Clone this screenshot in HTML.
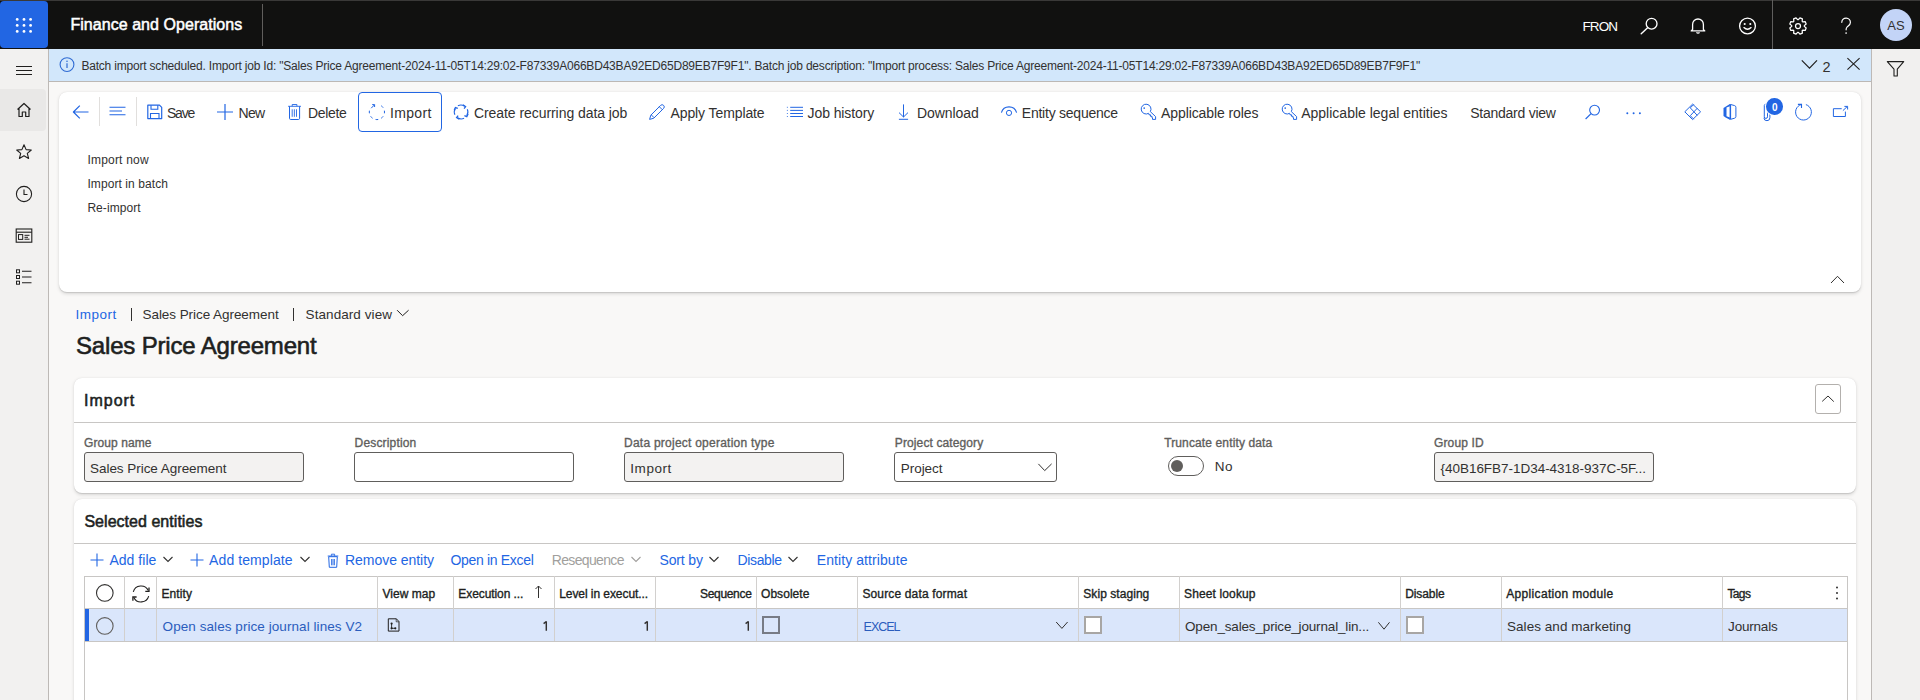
<!DOCTYPE html>
<html><head><meta charset="utf-8"><title>Finance and Operations</title>
<style>
html,body{margin:0;padding:0;}
body{width:1920px;height:700px;overflow:hidden;position:relative;background:#f9f8f7;font-family:"Liberation Sans", sans-serif;}
.t{position:absolute;white-space:pre;}
svg{overflow:visible}
</style></head><body>
<div style="position:absolute;left:0px;top:0px;width:1920px;height:49px;background:#111110"></div>
<div style="position:absolute;left:0px;top:0px;width:1920px;height:1px;background:#3a3938"></div>
<div style="position:absolute;left:0px;top:1px;width:48px;height:47px;background:#2266e3;border-radius:4px"></div>
<svg style="position:absolute;left:0px;top:0px;" width="48" height="49" viewBox="0 0 48 49" fill="none"><circle cx="17.2" cy="19.4" r="1.4" fill="#fff"/><circle cx="17.2" cy="25.4" r="1.4" fill="#fff"/><circle cx="17.2" cy="31.4" r="1.4" fill="#fff"/><circle cx="24" cy="19.4" r="1.4" fill="#fff"/><circle cx="24" cy="25.4" r="1.4" fill="#fff"/><circle cx="24" cy="31.4" r="1.4" fill="#fff"/><circle cx="30.6" cy="19.4" r="1.4" fill="#fff"/><circle cx="30.6" cy="25.4" r="1.4" fill="#fff"/><circle cx="30.6" cy="31.4" r="1.4" fill="#fff"/></svg>
<div style="position:absolute;left:262px;top:4px;width:1px;height:42px;background:#605e5c"></div>
<svg style="position:absolute;left:1638px;top:16px;" width="22" height="20" viewBox="0 0 22 20" fill="none"><circle cx="13.6" cy="7.7" r="5.4" stroke="#fff" stroke-width="1.35"/><path d="M9.6 11.7 L3.2 17.8" stroke="#fff" stroke-width="1.4" stroke-linecap="round"/></svg>
<svg style="position:absolute;left:1688px;top:16px;" width="20" height="20" viewBox="0 0 20 20" fill="none"><path d="M4.6 13.6 V8.4 a5.4 5.4 0 0 1 10.8 0 V13.6 l1.4 1.3 H3.2 Z" stroke="#fff" stroke-width="1.3" stroke-linejoin="round"/><path d="M8.6 16.2 a1.5 1.5 0 0 0 2.8 0" stroke="#fff" stroke-width="1.3"/></svg>
<svg style="position:absolute;left:1737px;top:15px;" width="22" height="22" viewBox="0 0 22 22" fill="none"><circle cx="10.5" cy="11" r="7.9" stroke="#fff" stroke-width="1.35"/><circle cx="7.7" cy="9" r="1.05" fill="#fff"/><circle cx="13.3" cy="9" r="1.05" fill="#fff"/><path d="M6.9 12.6 q3.6 3.4 7.2 0" stroke="#fff" stroke-width="1.35" stroke-linecap="round"/></svg>
<div style="position:absolute;left:1772px;top:0px;width:1px;height:49px;background:#5f5e5d"></div>
<svg style="position:absolute;left:1786.7px;top:15px;" width="22" height="22" viewBox="0 0 22 22" fill="none"><g transform="translate(11,11)"><path d="M6.29 0.38 L8.17 1.96 L7.16 4.39 L4.72 4.17 L4.17 4.72 L4.39 7.16 L1.96 8.17 L0.38 6.29 L-0.38 6.29 L-1.96 8.17 L-4.39 7.16 L-4.17 4.72 L-4.72 4.17 L-7.16 4.39 L-8.17 1.96 L-6.29 0.38 L-6.29 -0.38 L-8.17 -1.96 L-7.16 -4.39 L-4.72 -4.17 L-4.17 -4.72 L-4.39 -7.16 L-1.96 -8.17 L-0.38 -6.29 L0.38 -6.29 L1.96 -8.17 L4.39 -7.16 L4.17 -4.72 L4.72 -4.17 L7.16 -4.39 L8.17 -1.96 L6.29 -0.38Z" stroke="#fff" stroke-width="1.25" stroke-linejoin="round"/><circle r="2.5" stroke="#fff" stroke-width="1.25"/></g></svg>
<svg style="position:absolute;left:1836px;top:15px;" width="20" height="22" viewBox="0 0 20 22" fill="none"><path d="M5.8 7.3 a4.3 4.3 0 0 1 8.6 0.2 c0 2.4 -2 3.1 -3.2 4.3 c-0.8 0.8 -1.1 1.5 -1.1 3" stroke="#fff" stroke-width="1.2" stroke-linecap="round"/><circle cx="10.1" cy="18" r="0.85" fill="#fff"/></svg>
<div style="position:absolute;left:1880px;top:8.6px;width:32px;height:32px;border-radius:50%;background:#c3d4f7"></div>
<div style="position:absolute;left:0px;top:49px;width:48px;height:651px;background:#f2f1f0"></div>
<div style="position:absolute;left:48px;top:49px;width:1px;height:651px;background:#bdb9b6"></div>
<svg style="position:absolute;left:14px;top:60px;" width="20" height="20" viewBox="0 0 20 20" fill="none"><path d="M2 6.5 H18 M2 10.5 H18 M2 14.5 H18" stroke="#201f1e" stroke-width="1"/></svg>
<div style="position:absolute;left:0px;top:89px;width:46px;height:42px;background:#e9e8e7;border-radius:0 4px 4px 0"></div>
<svg style="position:absolute;left:14px;top:100px;" width="20" height="20" viewBox="0 0 20 20" fill="none"><path d="M3.5 9.5 L10 3.5 L16.5 9.5 M5 8.3 V16.5 H8.3 V12 H11.7 V16.5 H15 V8.3" stroke="#201f1e" stroke-width="1.2" stroke-linejoin="round"/></svg>
<svg style="position:absolute;left:14px;top:142px;" width="20" height="20" viewBox="0 0 20 20" fill="none"><path d="M10 2.8 L12.1 7.6 L17.3 8 L13.3 11.4 L14.6 16.5 L10 13.7 L5.4 16.5 L6.7 11.4 L2.7 8 L7.9 7.6 Z" stroke="#201f1e" stroke-width="1.1" stroke-linejoin="round"/></svg>
<svg style="position:absolute;left:14px;top:184px;" width="20" height="20" viewBox="0 0 20 20" fill="none"><circle cx="10" cy="10" r="7.6" stroke="#201f1e" stroke-width="1.1"/><path d="M10 5.5 V10.5 H13.5" stroke="#201f1e" stroke-width="1.1"/></svg>
<svg style="position:absolute;left:14px;top:226px;" width="20" height="20" viewBox="0 0 20 20" fill="none"><rect x="2.2" y="3" width="15.6" height="13.2" stroke="#201f1e" stroke-width="1.1"/><path d="M2.2 6.2 H17.8" stroke="#201f1e" stroke-width="1.1"/><rect x="4.5" y="8.6" width="4.2" height="4.8" stroke="#201f1e" stroke-width="1"/><path d="M10.5 9.3 H15.5 M10.5 11.3 H14 M10.5 13.2 H15.5" stroke="#201f1e" stroke-width="1"/></svg>
<svg style="position:absolute;left:14px;top:267px;" width="20" height="20" viewBox="0 0 20 20" fill="none"><rect x="2.5" y="2.8" width="3" height="3" stroke="#201f1e" stroke-width="1"/><rect x="2.5" y="8.5" width="3" height="3" stroke="#201f1e" stroke-width="1"/><rect x="2.5" y="14.2" width="3" height="3" stroke="#201f1e" stroke-width="1"/><path d="M8 4.3 H17.5 M8 10 H17.5 M8 15.7 H17.5 M8 4.3" stroke="#201f1e" stroke-width="1.1"/></svg>
<div style="position:absolute;left:49px;top:82px;width:1822px;height:618px;background:#f9f8f7"></div>
<div style="position:absolute;left:49px;top:49px;width:1822px;height:32px;background:#d2e7fb"></div>
<div style="position:absolute;left:49px;top:81px;width:1822px;height:1px;background:#bcb8b5"></div>
<svg style="position:absolute;left:58px;top:56px;" width="18" height="18" viewBox="0 0 18 18" fill="none"><circle cx="9" cy="8.6" r="6.9" stroke="#2f6bd3" stroke-width="1.1"/><path d="M9 7.3 V12" stroke="#2f6bd3" stroke-width="1.2"/><circle cx="9" cy="5.2" r="0.8" fill="#2f6bd3"/></svg>
<svg style="position:absolute;left:1800px;top:58px;" width="20" height="14" viewBox="0 0 20 14" fill="none"><path d="M1.8 2.3 L9.5 10.2 L17 2.3" stroke="#201f1e" stroke-width="1.2"/></svg>
<svg style="position:absolute;left:1845px;top:56px;" width="18" height="18" viewBox="0 0 18 18" fill="none"><path d="M2.4 2.2 L14.6 13.6 M14.6 2.2 L2.4 13.6" stroke="#201f1e" stroke-width="1.1"/></svg>
<div style="position:absolute;left:1871px;top:49px;width:49px;height:651px;background:#f1f0ef"></div>
<div style="position:absolute;left:1871px;top:49px;width:1px;height:651px;background:#bdb9b6"></div>
<svg style="position:absolute;left:1885px;top:59px;" width="22" height="20" viewBox="0 0 22 20" fill="none"><path d="M2.3 2.6 H18.7 L12.3 10.2 V17 H9 V10.2 Z" stroke="#201f1e" stroke-width="1.1" stroke-linejoin="round"/></svg>
<div style="position:absolute;left:59px;top:92px;width:1802px;height:200px;background:#fff;border-radius:8px;box-shadow:0 1.6px 3.6px rgba(0,0,0,0.13),0 0.3px 0.9px rgba(0,0,0,0.11)"></div>
<svg style="position:absolute;left:70px;top:102px;" width="22" height="20" viewBox="0 0 22 20" fill="none"><path d="M3.5 10 H18.5 M9.8 3.6 L3.4 10 L9.8 16.4" stroke="#2266e3" stroke-width="1.2" stroke-linejoin="round"/></svg>
<div style="position:absolute;left:99px;top:97px;width:1px;height:29px;background:#e1dfdd"></div>
<svg style="position:absolute;left:107px;top:102px;" width="22" height="20" viewBox="0 0 22 20" fill="none"><path d="M2.5 5.2 H18.5 M2.5 9 H15 M2.5 12.8 H18.5" stroke="#2266e3" stroke-width="1.1"/></svg>
<div style="position:absolute;left:136px;top:97px;width:1px;height:29px;background:#e1dfdd"></div>
<svg style="position:absolute;left:145px;top:102px;" width="20" height="20" viewBox="0 0 20 20" fill="none"><path d="M2.8 3.2 H14.5 L16.7 5.4 V16.6 H2.8 Z" stroke="#2266e3" stroke-width="1.2" stroke-linejoin="round"/><path d="M6 3.2 V7.2 H12.8 V3.2 M5.5 16.6 V11.5 H14 V16.6" stroke="#2266e3" stroke-width="1.1"/></svg>
<svg style="position:absolute;left:215px;top:102px;" width="20" height="20" viewBox="0 0 20 20" fill="none"><path d="M10 2 V18 M2 10 H18" stroke="#2266e3" stroke-width="1.2"/></svg>
<svg style="position:absolute;left:284px;top:102px;" width="20" height="20" viewBox="0 0 20 20" fill="none"><path d="M5.5 4.3 V16.3 a1.2 1.2 0 0 0 1.2 1.2 H14.4 a1.2 1.2 0 0 0 1.2 -1.2 V4.3" stroke="#2266e3" stroke-width="1"/><path d="M4.1 4.3 H17 M8.2 4.3 V2.5 H12.9 V4.3 M8.2 7.3 V14.8 M10.35 7.3 V14.8 M12.5 7.3 V14.8" stroke="#2266e3" stroke-width="0.9"/></svg>
<div style="position:absolute;left:358px;top:92px;width:82px;height:38px;border:1px solid #2266e3;border-radius:4px;box-sizing:content-box"></div>
<svg style="position:absolute;left:367px;top:102px;" width="20" height="20" viewBox="0 0 20 20" fill="none"><path d="M17.38 8.68 A7.6 7.6 0 0 1 17.38 11.32 M16.13 14.36 A7.6 7.6 0 0 1 14.26 16.23 M11.22 17.48 A7.6 7.6 0 0 1 8.58 17.48 M5.54 16.23 A7.6 7.6 0 0 1 3.67 14.36 M2.42 11.32 A7.6 7.6 0 0 1 2.42 8.68 M14.26 3.77 A7.6 7.6 0 0 1 16.13 5.64 " stroke="#2266e3" stroke-width="1"/><path d="M4.2 6.2 L7.4 2.9 M5.2 2.6 H7.6 V5" stroke="#2266e3" stroke-width="1"/></svg>
<svg style="position:absolute;left:451px;top:102px;" width="20" height="20" viewBox="0 0 20 20" fill="none"><path d="M6.9 3.8 A6.5 6.5 0 0 1 13.6 4.3 M16.3 7.3 A6.5 6.5 0 0 1 15.8 13.6 M13.1 16.3 A6.5 6.5 0 0 1 6.6 15.8 M3.9 12.8 A6.5 6.5 0 0 1 4.3 6.6" stroke="#2266e3" stroke-width="1.1"/><path d="M11.9 2.8 L14.6 4.6 L13.1 6.6 M17.1 12 L15.8 14.6 L13.4 13.6 M8.3 17.2 L5.6 15.6 L7.1 13.6 M3.2 8.3 L4.4 5.6 L6.8 6.4" stroke="#2266e3" stroke-width="1.3" stroke-linejoin="miter"/></svg>
<svg style="position:absolute;left:647px;top:102px;" width="20" height="20" viewBox="0 0 20 20" fill="none"><path d="M2.6 17.4 L3.8 13.2 L13.6 3.4 A2.1 2.1 0 0 1 16.6 6.4 L6.8 16.2 Z M12.3 4.7 L15.3 7.7 M4.3 12.9 L7.1 15.7" stroke="#2266e3" stroke-width="1" stroke-linejoin="round"/></svg>
<svg style="position:absolute;left:785px;top:102px;" width="20" height="20" viewBox="0 0 20 20" fill="none"><path d="M5.2 5.3 H18 M5.2 8.4 H18 M5.2 11.5 H18 M5.2 14.5 H18" stroke="#2266e3" stroke-width="1"/><path d="M1.9 5.3 H2.8 M1.9 8.4 H2.8 M1.9 11.5 H2.8 M1.9 14.5 H2.8" stroke="#2266e3" stroke-width="0.9"/></svg>
<svg style="position:absolute;left:893px;top:102px;" width="20" height="20" viewBox="0 0 20 20" fill="none"><path d="M10.5 2.4 V15 M6 10.6 L10.5 15 L15 10.6 M5.9 17.3 H15.1" stroke="#2266e3" stroke-width="1"/></svg>
<svg style="position:absolute;left:999px;top:102px;" width="20" height="20" viewBox="0 0 20 20" fill="none"><path d="M2.4 10.6 A7.9 7.9 0 0 1 17.6 10.6" stroke="#2266e3" stroke-width="1.1"/><circle cx="10" cy="10.9" r="2.6" stroke="#2266e3" stroke-width="1"/></svg>
<svg style="position:absolute;left:1139px;top:102px;" width="20" height="20" viewBox="0 0 20 20" fill="none"><path d="M11.3 9.6 A4.9 4.9 0 1 0 9.6 11.3 L10 12.8 H11.5 V14.3 H13 V15.8 H13.5 V17.4 H16.6 V14.6 Z" stroke="#2266e3" stroke-width="1" stroke-linejoin="miter"/><circle cx="5.2" cy="6.1" r="0.85" fill="#2266e3"/></svg>
<svg style="position:absolute;left:1280px;top:102px;" width="20" height="20" viewBox="0 0 20 20" fill="none"><path d="M11.3 9.6 A4.9 4.9 0 1 0 9.6 11.3 L10 12.8 H11.5 V14.3 H13 V15.8 H13.5 V17.4 H16.6 V14.6 Z" stroke="#2266e3" stroke-width="1" stroke-linejoin="miter"/><circle cx="5.2" cy="6.1" r="0.85" fill="#2266e3"/></svg>
<svg style="position:absolute;left:1583px;top:102px;" width="20" height="20" viewBox="0 0 20 20" fill="none"><circle cx="11.6" cy="8.1" r="4.9" stroke="#2266e3" stroke-width="1.1"/><path d="M8.1 11.6 L2.6 17" stroke="#2266e3" stroke-width="1.2"/></svg>
<svg style="position:absolute;left:1624px;top:104px;" width="20" height="16" viewBox="0 0 20 16" fill="none"><circle cx="3.3" cy="9.3" r="1" fill="#2266e3"/><circle cx="9.6" cy="9.3" r="1" fill="#2266e3"/><circle cx="15.9" cy="9.3" r="1" fill="#2266e3"/></svg>
<svg style="position:absolute;left:1682px;top:102px;" width="22" height="20" viewBox="0 0 22 20" fill="none"><path d="M2.8 9.8 L10.6 2.1 L18.6 9.8 L10.6 17.6 Z" stroke="#2266e3" stroke-width="1" stroke-linejoin="round"/><path d="M11.8 2.4 L8.3 5.9 L15.3 13.4 M11.8 17.2 L8.3 13.7 L15.3 6.2" stroke="#2266e3" stroke-width="1" stroke-linejoin="round"/></svg>
<svg style="position:absolute;left:1721px;top:102px;" width="20" height="20" viewBox="0 0 20 20" fill="none"><path d="M2.5 5.9 L8.9 2.1 V4.2 L5.5 5.6 V14.2 L8.9 15.6 V17.7 L4.6 15.4 L2.5 14 Z" fill="#2266e3"/><path d="M8.6 2.1 H10.1 V17.7 H8.6 Z" fill="#2266e3"/><path d="M10 2.6 L13.6 3.6 Q14.9 4 14.9 5.3 V14.5 Q14.9 15.8 13.6 16.2 L10 17.2" stroke="#2266e3" stroke-width="1"/></svg>
<svg style="position:absolute;left:1760px;top:102px;" width="16" height="20" viewBox="0 0 16 20" fill="none"><path d="M4.3 3.5 V14.8 a1.6 1.6 0 0 0 3.2 0 V6.5 M4.3 3.5 a1.6 1.6 0 0 1 1.6 -1.4 M9.9 7 V15.6 a3 3 0 0 1 -6 0.2" stroke="#2266e3" stroke-width="1"/></svg>
<div style="position:absolute;left:1766.2px;top:98px;width:16.6px;height:16.6px;border-radius:50%;background:#2266e3;box-shadow:0 0 0 1px #fff"></div>
<svg style="position:absolute;left:1793px;top:102px;" width="20" height="20" viewBox="0 0 20 20" fill="none"><path d="M8.4 2.5 A7.9 7.9 0 1 0 12.9 2.6" stroke="#2266e3" stroke-width="1"/><path d="M4.9 2.4 H8.5 V5.9" stroke="#2266e3" stroke-width="1.1"/></svg>
<svg style="position:absolute;left:1830px;top:102px;" width="20" height="20" viewBox="0 0 20 20" fill="none"><path d="M11.7 6.7 H3.4 V14.5 H15.4 V9.6" stroke="#2266e3" stroke-width="1"/><path d="M12.9 8.6 L17.3 4.5 M14.4 4.4 H17.6 V7.5" stroke="#2266e3" stroke-width="1"/></svg>
<svg style="position:absolute;left:1829px;top:272px;" width="18" height="14" viewBox="0 0 18 14" fill="none"><path d="M2 11 L8.5 4.3 L15 11" stroke="#323130" stroke-width="1"/></svg>
<div style="position:absolute;left:130.5px;top:308px;width:1px;height:13px;background:#323130"></div>
<div style="position:absolute;left:293px;top:308px;width:1px;height:13px;background:#323130"></div>
<svg style="position:absolute;left:395px;top:306px;" width="16" height="12" viewBox="0 0 16 12" fill="none"><path d="M2.1 4.2 L7.6 9.7 L13.6 4.2" stroke="#201f1e" stroke-width="1"/></svg>
<div style="position:absolute;left:74px;top:378px;width:1782px;height:115px;background:#fff;border-radius:8px;box-shadow:0 1.6px 3.6px rgba(0,0,0,0.13),0 0.3px 0.9px rgba(0,0,0,0.11)"></div>
<div style="position:absolute;left:74px;top:422px;width:1782px;height:1px;background:#c8c6c4"></div>
<div style="position:absolute;left:1815px;top:384px;width:26px;height:30px;border:1px solid #b3b0ad;border-radius:3px;box-sizing:border-box"></div>
<svg style="position:absolute;left:1820px;top:391px;" width="18" height="14" viewBox="0 0 18 14" fill="none"><path d="M2.2 10.4 L8 5 L13.8 10.6" stroke="#323130" stroke-width="1"/></svg>
<div style="position:absolute;top:452px;height:30px;box-sizing:border-box;border:1px solid #605e5c;border-radius:3px;left:84px;width:220px;background:#f3f2f1"></div>
<div style="position:absolute;top:452px;height:30px;box-sizing:border-box;border:1px solid #605e5c;border-radius:3px;left:354px;width:220px;background:#fff"></div>
<div style="position:absolute;top:452px;height:30px;box-sizing:border-box;border:1px solid #605e5c;border-radius:3px;left:624px;width:220px;background:#f3f2f1"></div>
<div style="position:absolute;top:452px;height:30px;box-sizing:border-box;border:1px solid #605e5c;border-radius:3px;left:894px;width:163px;background:#fff"></div>
<svg style="position:absolute;left:1035px;top:459px;" width="18" height="14" viewBox="0 0 18 14" fill="none"><path d="M3.4 4.9 L9.7 11.6 L16.6 4.9" stroke="#323130" stroke-width="1"/></svg>
<div style="position:absolute;left:1168px;top:456px;width:36px;height:20px;box-sizing:border-box;border:1px solid #605e5c;border-radius:10px;background:#fff"></div>
<div style="position:absolute;left:1171px;top:460px;width:12px;height:12px;border-radius:50%;background:#605e5c"></div>
<div style="position:absolute;top:452px;height:30px;box-sizing:border-box;border:1px solid #605e5c;border-radius:3px;left:1434px;width:220px;background:#f3f2f1"></div>
<div style="position:absolute;left:74px;top:499px;width:1782px;height:240px;background:#fff;border-radius:8px;box-shadow:0 1.6px 3.6px rgba(0,0,0,0.13),0 0.3px 0.9px rgba(0,0,0,0.11)"></div>
<div style="position:absolute;left:74px;top:543px;width:1782px;height:1px;background:#c8c6c4"></div>
<svg style="position:absolute;left:89px;top:552px;" width="16" height="16" viewBox="0 0 16 16" fill="none"><path d="M8 1.5 V14.5 M1.5 8 H14.5" stroke="#2266e3" stroke-width="1.1"/></svg>
<svg style="position:absolute;left:162px;top:554px;" width="12" height="10" viewBox="0 0 12 10" fill="none"><path d="M1.5 3 L6 7.5 L10.5 3" stroke="#323130" stroke-width="1.1"/></svg>
<svg style="position:absolute;left:189px;top:552px;" width="16" height="16" viewBox="0 0 16 16" fill="none"><path d="M8 1.5 V14.5 M1.5 8 H14.5" stroke="#2266e3" stroke-width="1.1"/></svg>
<svg style="position:absolute;left:299px;top:554px;" width="12" height="10" viewBox="0 0 12 10" fill="none"><path d="M1.5 3 L6 7.5 L10.5 3" stroke="#323130" stroke-width="1.1"/></svg>
<svg style="position:absolute;left:325px;top:551.6px;" width="16" height="18" viewBox="0 0 16 18" fill="none"><path d="M3.7 4.7 H12.3 L11.7 15.3 H4.3 Z" stroke="#2266e3" stroke-width="1" stroke-linejoin="round"/><path d="M2.7 4 H13.3 M6.4 3.8 V2.2 H9.6 V3.8 M6.6 7 V13.3 M8 7 V13.3 M9.4 7 V13.3" stroke="#2266e3" stroke-width="0.9"/></svg>
<svg style="position:absolute;left:630px;top:554px;" width="12" height="10" viewBox="0 0 12 10" fill="none"><path d="M1.5 3 L6 7.5 L10.5 3" stroke="#a19f9d" stroke-width="1.1"/></svg>
<svg style="position:absolute;left:708px;top:554px;" width="12" height="10" viewBox="0 0 12 10" fill="none"><path d="M1.5 3 L6 7.5 L10.5 3" stroke="#323130" stroke-width="1.1"/></svg>
<svg style="position:absolute;left:787px;top:554px;" width="12" height="10" viewBox="0 0 12 10" fill="none"><path d="M1.5 3 L6 7.5 L10.5 3" stroke="#323130" stroke-width="1.1"/></svg>
<div style="position:absolute;left:84px;top:576px;width:1764px;height:1px;background:#c8c6c4"></div>
<div style="position:absolute;left:84px;top:608px;width:1764px;height:1px;background:#c8c6c4"></div>
<div style="position:absolute;left:85px;top:609px;width:1762px;height:32px;background:#dae6fb"></div>
<div style="position:absolute;left:84px;top:641px;width:1764px;height:1px;background:#c8c6c4"></div>
<div style="position:absolute;left:84px;top:576px;width:1px;height:124px;background:#c8c6c4"></div>
<div style="position:absolute;left:124px;top:576px;width:1px;height:65px;background:#d2d0ce"></div>
<div style="position:absolute;left:156px;top:576px;width:1px;height:65px;background:#d2d0ce"></div>
<div style="position:absolute;left:377px;top:576px;width:1px;height:65px;background:#d2d0ce"></div>
<div style="position:absolute;left:453px;top:576px;width:1px;height:65px;background:#d2d0ce"></div>
<div style="position:absolute;left:554px;top:576px;width:1px;height:65px;background:#d2d0ce"></div>
<div style="position:absolute;left:655px;top:576px;width:1px;height:65px;background:#d2d0ce"></div>
<div style="position:absolute;left:756px;top:576px;width:1px;height:65px;background:#d2d0ce"></div>
<div style="position:absolute;left:857px;top:576px;width:1px;height:65px;background:#d2d0ce"></div>
<div style="position:absolute;left:1078px;top:576px;width:1px;height:65px;background:#d2d0ce"></div>
<div style="position:absolute;left:1179px;top:576px;width:1px;height:65px;background:#d2d0ce"></div>
<div style="position:absolute;left:1400px;top:576px;width:1px;height:65px;background:#d2d0ce"></div>
<div style="position:absolute;left:1501px;top:576px;width:1px;height:65px;background:#d2d0ce"></div>
<div style="position:absolute;left:1722px;top:576px;width:1px;height:65px;background:#d2d0ce"></div>
<div style="position:absolute;left:1847px;top:576px;width:1px;height:124px;background:#c8c6c4"></div>
<div style="position:absolute;left:85px;top:609px;width:4px;height:32px;background:#2266e3"></div>
<svg style="position:absolute;left:95px;top:583px;" width="20" height="20" viewBox="0 0 20 20" fill="none"><circle cx="9.8" cy="9.9" r="8.3" stroke="#323130" stroke-width="1.1"/></svg>
<svg style="position:absolute;left:95px;top:616px;" width="20" height="20" viewBox="0 0 20 20" fill="none"><circle cx="9.8" cy="9.9" r="8.3" stroke="#605e5c" stroke-width="1.1"/></svg>
<svg style="position:absolute;left:130px;top:583px;" width="22" height="22" viewBox="0 0 22 22" fill="none"><path d="M3.3 8.9 A8 8 0 0 1 18.3 7.6 M18.7 13.1 A8 8 0 0 1 3.8 14.4" stroke="#201f1e" stroke-width="1.1"/><path d="M19 4.6 V8.3 H15.3 M2.9 17.7 V14 H6.6" stroke="#201f1e" stroke-width="1.3"/></svg>
<svg style="position:absolute;left:534px;top:584px;" width="10" height="16" viewBox="0 0 10 16" fill="none"><path d="M4.5 2 V14 M1.5 5 L4.5 2 L7.5 5" stroke="#323130" stroke-width="1"/></svg>
<svg style="position:absolute;left:1832px;top:584px;" width="10" height="18" viewBox="0 0 10 18" fill="none"><circle cx="5" cy="3.5" r="1" fill="#323130"/><circle cx="5" cy="9" r="1" fill="#323130"/><circle cx="5" cy="14.5" r="1" fill="#323130"/></svg>
<svg style="position:absolute;left:385px;top:615px;" width="18" height="20" viewBox="0 0 18 20" fill="none"><path d="M3.3 3.8 H11.4 L14 6.6 V16.1 H3.3 Z" stroke="#201f1e" stroke-width="1" stroke-linejoin="miter"/><path d="M11.2 3.8 V6.8 H14" stroke="#201f1e" stroke-width="0.7"/><path d="M6.6 8.6 V13.3 H10.3" stroke="#201f1e" stroke-width="0.9"/><circle cx="6.6" cy="8.6" r="1.1" fill="#201f1e"/><circle cx="6.6" cy="13.3" r="1.1" fill="#201f1e"/><circle cx="10.3" cy="13.3" r="1.1" fill="#201f1e"/></svg>
<svg style="position:absolute;left:541.2px;top:621px;" width="7" height="11" viewBox="0 0 7 11" fill="none"><path d="M5.3 0.3 V9.8 M5.3 0.5 L2.6 2.6" stroke="#323130" stroke-width="1.45"/></svg>
<svg style="position:absolute;left:642.2px;top:621px;" width="7" height="11" viewBox="0 0 7 11" fill="none"><path d="M5.3 0.3 V9.8 M5.3 0.5 L2.6 2.6" stroke="#323130" stroke-width="1.45"/></svg>
<svg style="position:absolute;left:743.2px;top:621px;" width="7" height="11" viewBox="0 0 7 11" fill="none"><path d="M5.3 0.3 V9.8 M5.3 0.5 L2.6 2.6" stroke="#323130" stroke-width="1.45"/></svg>
<div style="position:absolute;width:18px;height:18px;box-sizing:border-box;border:2px solid #777b85;left:762px;top:616px"></div>
<svg style="position:absolute;left:1052px;top:619px;" width="18" height="14" viewBox="0 0 18 14" fill="none"><path d="M4.2 3 L9.9 9.4 L15.6 3" stroke="#323130" stroke-width="1"/></svg>
<div style="position:absolute;width:18px;height:18px;box-sizing:border-box;border:2px solid #a8a6a4;background:#fff;left:1084px;top:616px"></div>
<svg style="position:absolute;left:1375px;top:619px;" width="18" height="14" viewBox="0 0 18 14" fill="none"><path d="M3.4 3.3 L9 10.2 L14.5 3.3" stroke="#323130" stroke-width="1"/></svg>
<div style="position:absolute;width:18px;height:18px;box-sizing:border-box;border:2px solid #a8a6a4;background:#fff;left:1406px;top:616px"></div>
<span class="t" style="left:70.40px;top:17.26px;font-size:16px;line-height:16px;color:#ffffff;letter-spacing:0.049px;-webkit-text-stroke:0.5px #fff;">Finance and Operations</span>
<span class="t" style="left:1582.50px;top:19.57px;font-size:13.5px;line-height:13.5px;color:#ffffff;letter-spacing:-0.915px;">FRON</span>
<span class="t" style="left:1887.33px;top:19.00px;font-size:13px;line-height:13px;color:#323130;">AS</span>
<span class="t" style="left:81.40px;top:59.64px;font-size:12px;line-height:12px;color:#323130;letter-spacing:-0.196px;">Batch import scheduled. Import job Id: "Sales Price Agreement-2024-11-05T14:29:02-F87339A066BD43BA92ED65D89EB7F9F1". Batch job description: "Import process: Sales Price Agreement-2024-11-05T14:29:02-F87339A066BD43BA92ED65D89EB7F9F1"</span>
<span class="t" style="left:1822.60px;top:59.53px;font-size:14.5px;line-height:14.5px;color:#323130;">2</span>
<span class="t" style="left:167.00px;top:106.05px;font-size:14px;line-height:14px;color:#323130;letter-spacing:-1.237px;">Save</span>
<span class="t" style="left:238.60px;top:106.05px;font-size:14px;line-height:14px;color:#323130;letter-spacing:-0.803px;">New</span>
<span class="t" style="left:308.00px;top:106.05px;font-size:14px;line-height:14px;color:#323130;letter-spacing:-0.334px;">Delete</span>
<span class="t" style="left:390.00px;top:106.05px;font-size:14px;line-height:14px;color:#323130;letter-spacing:0.325px;">Import</span>
<span class="t" style="left:473.90px;top:106.05px;font-size:14px;line-height:14px;color:#323130;letter-spacing:-0.057px;">Create recurring data job</span>
<span class="t" style="left:670.50px;top:106.05px;font-size:14px;line-height:14px;color:#323130;letter-spacing:-0.101px;">Apply Template</span>
<span class="t" style="left:807.60px;top:106.05px;font-size:14px;line-height:14px;color:#323130;letter-spacing:-0.100px;">Job history</span>
<span class="t" style="left:917.00px;top:106.05px;font-size:14px;line-height:14px;color:#323130;letter-spacing:-0.066px;">Download</span>
<span class="t" style="left:1021.80px;top:106.05px;font-size:14px;line-height:14px;color:#323130;letter-spacing:-0.237px;">Entity sequence</span>
<span class="t" style="left:1161.10px;top:106.05px;font-size:14px;line-height:14px;color:#323130;letter-spacing:-0.102px;">Applicable roles</span>
<span class="t" style="left:1301.20px;top:106.05px;font-size:14px;line-height:14px;color:#323130;letter-spacing:0.003px;">Applicable legal entities</span>
<span class="t" style="left:1470.20px;top:106.05px;font-size:14px;line-height:14px;color:#323130;letter-spacing:-0.251px;">Standard view</span>
<span class="t" style="left:1771.92px;top:102.53px;font-size:10px;line-height:10px;color:#ffffff;font-weight:bold;">0</span>
<span class="t" style="left:87.40px;top:153.84px;font-size:12px;line-height:12px;color:#323130;letter-spacing:0.205px;">Import now</span>
<span class="t" style="left:87.40px;top:177.64px;font-size:12px;line-height:12px;color:#323130;letter-spacing:0.088px;">Import in batch</span>
<span class="t" style="left:87.40px;top:201.64px;font-size:12px;line-height:12px;color:#323130;letter-spacing:0.066px;">Re-import</span>
<span class="t" style="left:75.40px;top:307.57px;font-size:13.5px;line-height:13.5px;color:#2266e3;letter-spacing:0.528px;">Import</span>
<span class="t" style="left:142.50px;top:307.57px;font-size:13.5px;line-height:13.5px;color:#323130;letter-spacing:-0.058px;">Sales Price Agreement</span>
<span class="t" style="left:305.60px;top:307.57px;font-size:13.5px;line-height:13.5px;color:#323130;letter-spacing:0.071px;">Standard view</span>
<span class="t" style="left:76.00px;top:333.68px;font-size:24px;line-height:24px;color:#201f1e;letter-spacing:-0.172px;-webkit-text-stroke:0.6px #201f1e;">Sales Price Agreement</span>
<span class="t" style="left:84.10px;top:392.66px;font-size:16px;line-height:16px;color:#201f1e;letter-spacing:0.971px;-webkit-text-stroke:0.55px #201f1e;">Import</span>
<span class="t" style="left:84.10px;top:436.94px;font-size:12px;line-height:12px;color:#605e5c;letter-spacing:0.066px;-webkit-text-stroke:0.35px #605e5c;">Group name</span>
<span class="t" style="left:354.60px;top:436.94px;font-size:12px;line-height:12px;color:#605e5c;letter-spacing:0.168px;-webkit-text-stroke:0.35px #605e5c;">Description</span>
<span class="t" style="left:624.00px;top:436.94px;font-size:12px;line-height:12px;color:#605e5c;letter-spacing:0.243px;-webkit-text-stroke:0.35px #605e5c;">Data project operation type</span>
<span class="t" style="left:894.80px;top:436.94px;font-size:12px;line-height:12px;color:#605e5c;letter-spacing:0.113px;-webkit-text-stroke:0.35px #605e5c;">Project category</span>
<span class="t" style="left:1164.20px;top:436.94px;font-size:12px;line-height:12px;color:#605e5c;letter-spacing:0.126px;-webkit-text-stroke:0.35px #605e5c;">Truncate entity data</span>
<span class="t" style="left:1434.00px;top:436.94px;font-size:12px;line-height:12px;color:#605e5c;letter-spacing:0.131px;-webkit-text-stroke:0.35px #605e5c;">Group ID</span>
<span class="t" style="left:90.00px;top:461.67px;font-size:13.5px;line-height:13.5px;color:#323130;letter-spacing:-0.043px;">Sales Price Agreement</span>
<span class="t" style="left:630.30px;top:461.67px;font-size:13.5px;line-height:13.5px;color:#323130;letter-spacing:0.548px;">Import</span>
<span class="t" style="left:900.70px;top:461.57px;font-size:13.5px;line-height:13.5px;color:#323130;letter-spacing:-0.019px;">Project</span>
<span class="t" style="left:1214.70px;top:460.17px;font-size:13.5px;line-height:13.5px;color:#323130;letter-spacing:0.443px;">No</span>
<span class="t" style="left:1440.50px;top:461.67px;font-size:13.5px;line-height:13.5px;color:#323130;letter-spacing:-0.030px;">{40B16FB7-1D34-4318-937C-5F...</span>
<span class="t" style="left:84.40px;top:513.56px;font-size:16px;line-height:16px;color:#201f1e;letter-spacing:0.037px;-webkit-text-stroke:0.55px #201f1e;">Selected entities</span>
<span class="t" style="left:109.40px;top:553.05px;font-size:14px;line-height:14px;color:#2266e3;letter-spacing:0.043px;">Add file</span>
<span class="t" style="left:209.10px;top:553.05px;font-size:14px;line-height:14px;color:#2266e3;letter-spacing:0.091px;">Add template</span>
<span class="t" style="left:345.00px;top:553.05px;font-size:14px;line-height:14px;color:#2266e3;letter-spacing:-0.040px;">Remove entity</span>
<span class="t" style="left:450.50px;top:553.05px;font-size:14px;line-height:14px;color:#2266e3;letter-spacing:-0.326px;">Open in Excel</span>
<span class="t" style="left:551.75px;top:553.05px;font-size:14px;line-height:14px;color:#a19f9d;letter-spacing:-0.651px;">Resequence</span>
<span class="t" style="left:659.50px;top:553.05px;font-size:14px;line-height:14px;color:#2266e3;letter-spacing:-0.142px;">Sort by</span>
<span class="t" style="left:737.50px;top:553.05px;font-size:14px;line-height:14px;color:#2266e3;letter-spacing:-0.365px;">Disable</span>
<span class="t" style="left:816.75px;top:553.05px;font-size:14px;line-height:14px;color:#2266e3;letter-spacing:0.084px;">Entity attribute</span>
<span class="t" style="left:161.40px;top:587.74px;font-size:12px;line-height:12px;color:#201f1e;letter-spacing:0.098px;-webkit-text-stroke:0.35px #201f1e;">Entity</span>
<span class="t" style="left:382.50px;top:587.74px;font-size:12px;line-height:12px;color:#201f1e;letter-spacing:0.033px;-webkit-text-stroke:0.35px #201f1e;">View map</span>
<span class="t" style="left:458.30px;top:587.74px;font-size:12px;line-height:12px;color:#201f1e;letter-spacing:-0.086px;-webkit-text-stroke:0.35px #201f1e;">Execution ...</span>
<span class="t" style="left:559.20px;top:587.74px;font-size:12px;line-height:12px;color:#201f1e;letter-spacing:-0.062px;-webkit-text-stroke:0.35px #201f1e;">Level in execut...</span>
<span class="t" style="left:700.00px;top:587.74px;font-size:12px;line-height:12px;color:#201f1e;letter-spacing:-0.321px;-webkit-text-stroke:0.35px #201f1e;">Sequence</span>
<span class="t" style="left:761.00px;top:587.74px;font-size:12px;line-height:12px;color:#201f1e;letter-spacing:0.053px;-webkit-text-stroke:0.35px #201f1e;">Obsolete</span>
<span class="t" style="left:862.40px;top:587.74px;font-size:12px;line-height:12px;color:#201f1e;letter-spacing:0.150px;-webkit-text-stroke:0.35px #201f1e;">Source data format</span>
<span class="t" style="left:1083.30px;top:587.74px;font-size:12px;line-height:12px;color:#201f1e;letter-spacing:0.057px;-webkit-text-stroke:0.35px #201f1e;">Skip staging</span>
<span class="t" style="left:1184.10px;top:587.74px;font-size:12px;line-height:12px;color:#201f1e;letter-spacing:0.122px;-webkit-text-stroke:0.35px #201f1e;">Sheet lookup</span>
<span class="t" style="left:1405.20px;top:587.74px;font-size:12px;line-height:12px;color:#201f1e;letter-spacing:-0.087px;-webkit-text-stroke:0.35px #201f1e;">Disable</span>
<span class="t" style="left:1506.30px;top:587.74px;font-size:12px;line-height:12px;color:#201f1e;letter-spacing:0.318px;-webkit-text-stroke:0.35px #201f1e;">Application module</span>
<span class="t" style="left:1727.40px;top:587.74px;font-size:12px;line-height:12px;color:#201f1e;letter-spacing:-0.616px;-webkit-text-stroke:0.35px #201f1e;">Tags</span>
<span class="t" style="left:162.60px;top:619.97px;font-size:13.5px;line-height:13.5px;color:#2b5dbd;letter-spacing:0.064px;">Open sales price journal lines V2</span>
<span class="t" style="left:863.60px;top:620.62px;font-size:12.5px;line-height:12.5px;color:#2b5dbd;letter-spacing:-1.023px;">EXCEL</span>
<span class="t" style="left:1185.00px;top:619.77px;font-size:13.5px;line-height:13.5px;color:#323130;letter-spacing:-0.161px;">Open_sales_price_journal_lin...</span>
<span class="t" style="left:1507.00px;top:619.77px;font-size:13.5px;line-height:13.5px;color:#323130;letter-spacing:0.046px;">Sales and marketing</span>
<span class="t" style="left:1728.10px;top:619.77px;font-size:13.5px;line-height:13.5px;color:#323130;letter-spacing:-0.204px;">Journals</span>
</body></html>
